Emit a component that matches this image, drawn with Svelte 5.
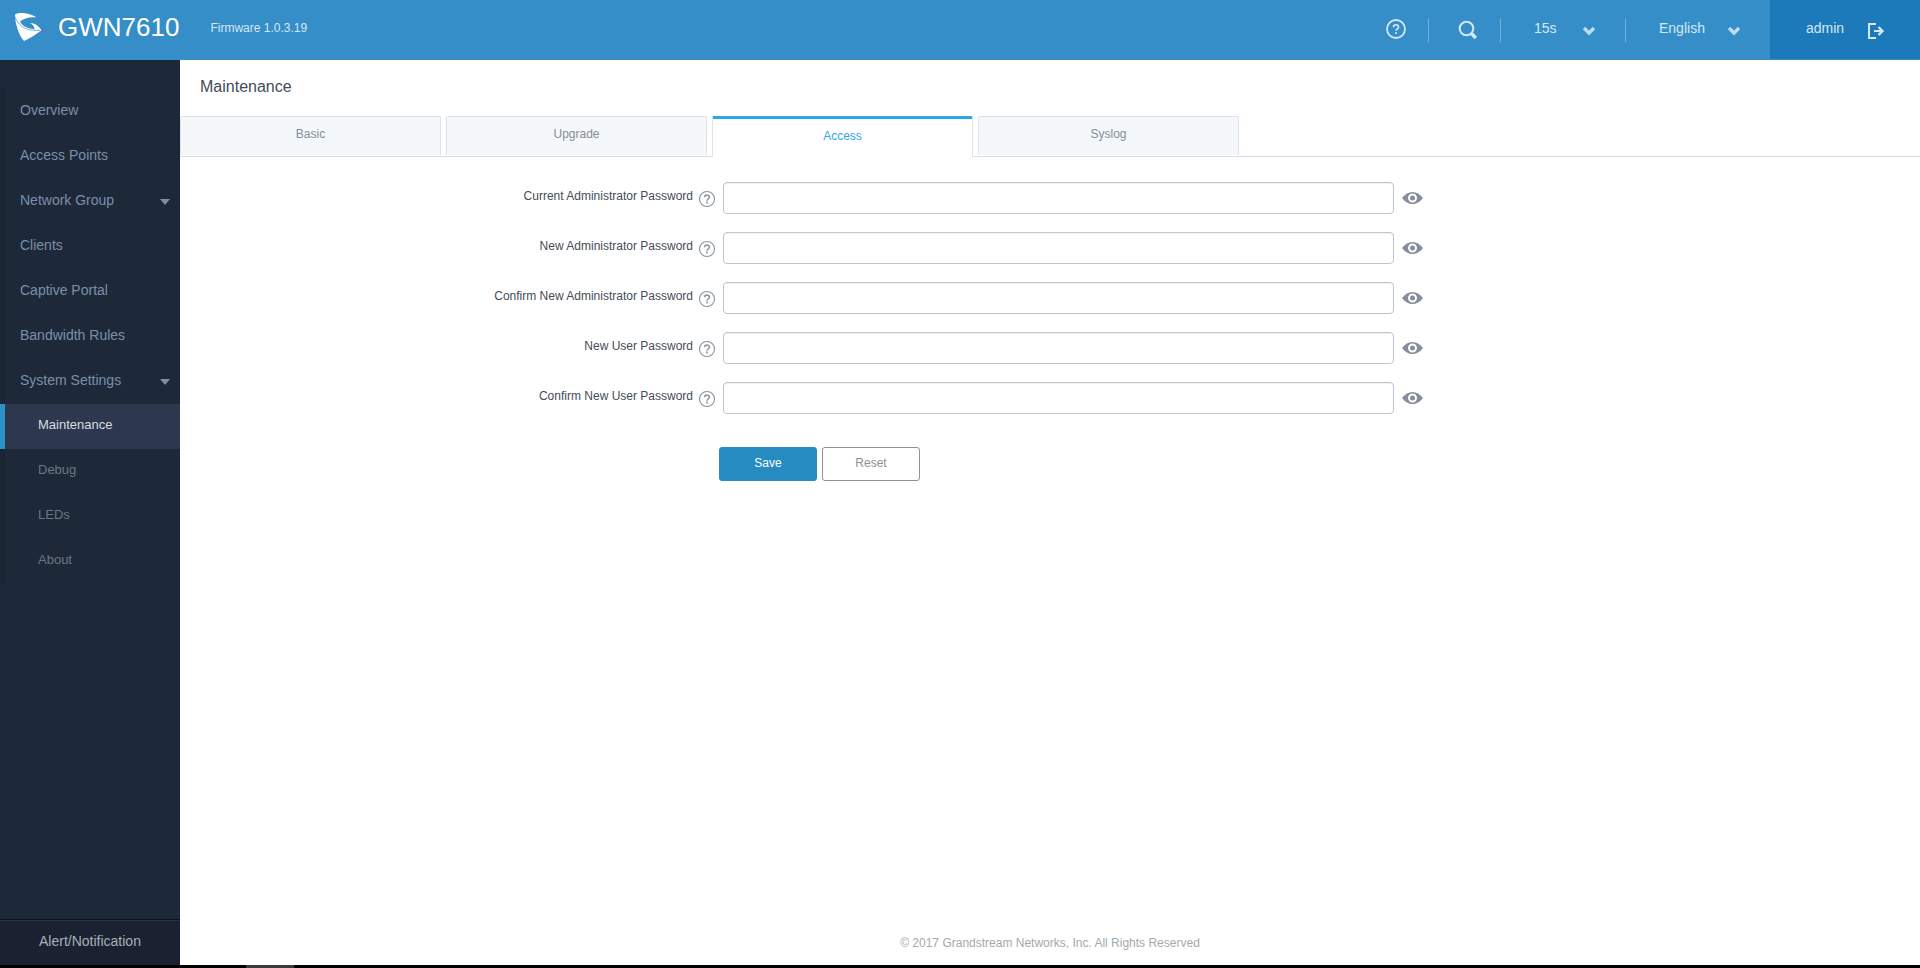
<script>
  let refresh = '15s'
  let language = 'English'
  let activeTab = 'Access'

  const menu = [
    { label: 'Overview' },
    { label: 'Access Points' },
    { label: 'Network Group', expandable: true },
    { label: 'Clients' },
    { label: 'Captive Portal' },
    { label: 'Bandwidth Rules' },
    { label: 'System Settings', expandable: true }
  ]
  const submenu = ['Maintenance', 'Debug', 'LEDs', 'About']
  const tabs = ['Basic', 'Upgrade', 'Access', 'Syslog']

  let fields = [
    { id: 'current-admin', label: 'Current Administrator Password', value: '', visible: false },
    { id: 'new-admin', label: 'New Administrator Password', value: '', visible: false },
    { id: 'confirm-admin', label: 'Confirm New Administrator Password', value: '', visible: false },
    { id: 'new-user', label: 'New User Password', value: '', visible: false },
    { id: 'confirm-user', label: 'Confirm New User Password', value: '', visible: false }
  ]

  function reset() {
    fields = fields.map((field) => ({ ...field, value: '', visible: false }))
  }
</script>

<div class="app">
  <header class="topbar">
    <svg class="logo" width="30" height="30" viewBox="0 0 30 30" aria-hidden="true">
      <path fill="#fff" d="M1 2.500C3 1 6 .9 9 1 14 1.300 19 3 22.500 5.500 15 4.800 10 6.500 6 9.500 8 13.500 12 16.200 20.500 17.300 20.500 14.500 18.500 12 16 11 20.500 10.800 25 14 27.500 18.300 22 22.500 16 26.500 10 29 5 23.500 1 12 1 2.500Z" />
      <path fill="none" stroke="#368fc9" stroke-width=".7" d="M1 5C4 12 9 17.500 19 18.200l7 .2" />
      <circle cx="28.500" cy="18.500" r=".7" fill="#d8406f" />
    </svg>
    <span class="product">GWN7610</span>
    <span class="firmware">Firmware 1.0.3.19</span>

    <div class="tools">
      <button class="tool tool--help" type="button" aria-label="Help">
        <svg width="20" height="20" viewBox="0 0 20 20" fill="none" stroke="currentColor" stroke-width="1.800">
          <circle cx="10" cy="10" r="9" />
          <path d="M7.500 8.200c0-3.300 5-3.300 5 0 0 1.800-2.500 1.800-2.500 3.600M10 13v2" stroke-width="1.600" />
        </svg>
      </button>
      <button class="tool tool--search" type="button" aria-label="Search">
        <svg width="20" height="20" viewBox="0 0 20 20" fill="none" stroke="currentColor">
          <circle cx="8.500" cy="8.500" r="6.800" stroke-width="2" />
          <path d="M13 13l4.800 5" stroke-width="3.400" />
        </svg>
      </button>
      <div class="picker picker--refresh">
        <select bind:value={refresh} aria-label="Refresh interval">
          <option>15s</option>
        </select>
        <svg class="chevron" width="14" height="10" viewBox="0 0 14 10"><path d="M2 2l5 5 5-5" fill="none" stroke="currentColor" stroke-width="3.400" /></svg>
      </div>
      <div class="picker picker--language">
        <select bind:value={language} aria-label="Language">
          <option>English</option>
        </select>
        <svg class="chevron" width="14" height="10" viewBox="0 0 14 10"><path d="M2 2l5 5 5-5" fill="none" stroke="currentColor" stroke-width="3.400" /></svg>
      </div>
      <button class="account" type="button">
        <span>admin</span>
        <svg width="18" height="16" viewBox="0 0 18 16" fill="none" stroke="currentColor" stroke-width="2">
          <path d="M9 1H2v14h7M7 8h9" />
          <path d="M11.500 4l4 4-4 4" stroke-width="2.400" />
        </svg>
      </button>
    </div>
  </header>

  <div class="body">
    <aside class="sidebar">
      <nav>
        {#each menu as item}
          <a class="item" href="#menu">
            <span>{item.label}</span>
            {#if item.expandable}<i class="arrow"></i>{/if}
          </a>
        {/each}
        {#each submenu as label}
          <a class="item item--sub" class:item--active={label === 'Maintenance'} href="#submenu">
            <span>{label}</span>
          </a>
        {/each}
      </nav>
      <a class="alerts" href="#alerts">Alert/Notification</a>
    </aside>

    <main>
      <h1>Maintenance</h1>
      <div class="tabs" role="tablist">
        {#each tabs as tab}
          <button
            class="tab"
            class:tab--active={tab === activeTab}
            type="button"
            role="tab"
            aria-selected={tab === activeTab}
            on:click={() => (activeTab = tab)}
          >{tab}</button>
        {/each}
      </div>

      <form on:submit|preventDefault on:reset|preventDefault={reset}>
        {#each fields as field}
          <div class="row">
            <div class="caption">
              <label for={field.id}>{field.label}</label>
              <svg class="hint" width="18" height="18" viewBox="0 0 18 18" fill="none" stroke="currentColor">
                <circle cx="9" cy="9" r="7.500" stroke-width="1.100" />
                <path d="M6.600 7.300c0-3 4.800-3 4.800 0 0 1.700-2.400 1.700-2.400 3.400M9 11.600v2" stroke-width="1.500" />
              </svg>
            </div>
            <input
              id={field.id}
              type={field.visible ? 'text' : 'password'}
              bind:value={field.value}
            />
            <button
              class="reveal"
              type="button"
              aria-label="Show password"
              on:click={() => (field.visible = !field.visible)}
            >
              <svg width="21" height="12" viewBox="0 0 21 12">
                <path fill="currentColor" d="M0 6C6-2 15-2 21 6 15 14 6 14 0 6Z" />
                <circle cx="10.500" cy="6" r="3.500" fill="currentColor" stroke="#fff" stroke-width="2" />
              </svg>
            </button>
          </div>
        {/each}
        <div class="row">
          <div class="actions">
            <button class="button button--primary" type="submit">Save</button>
            <button class="button button--secondary" type="reset">Reset</button>
          </div>
        </div>
      </form>

      <footer>© 2017 Grandstream Networks, Inc. All Rights Reserved</footer>
    </main>
  </div>
  <div class="dock"><span></span></div>
</div>

<style>
  :global(body) {
    margin: 0;
  }

  .app {
    display: flex;
    flex-direction: column;
    min-height: 100vh;
    font-family: "Liberation Sans", Arial, sans-serif;
    font-size: 12px;
    line-height: 16px;
    color: #454c57;
    background: #fff;
  }

  .app *,
  .app *::before {
    box-sizing: border-box;
  }

  button,
  select,
  input {
    margin: 0;
    padding: 0;
    border: 0;
    font: inherit;
    color: inherit;
    background: none;
  }

  button {
    cursor: pointer;
  }

  svg {
    display: block;
    flex: none;
  }

  a {
    color: inherit;
    text-decoration: none;
  }

  .topbar {
    display: flex;
    align-items: center;
    height: 60px;
    padding-left: 14px;
    color: #d5e8f5;
    background: #358ec8;
  }

  .logo {
    margin-bottom: 6px;
  }

  .product {
    margin-left: 14px;
    padding-bottom: 6px;
    font-size: 26px;
    line-height: 30px;
    color: #fff;
  }

  .firmware {
    margin-left: 31px;
    padding-bottom: 4px;
  }

  .tools {
    display: flex;
    align-items: center;
    height: 100%;
    margin-left: auto;
    font-size: 14px;
  }

  .tool {
    display: flex;
    align-items: center;
    height: 24px;
    border-right: 1px solid #72b0d9;
  }

  .tool--help {
    padding: 0 22px 2px 0;
  }

  .tool--search {
    padding: 0 22px 0 29px;
  }

  .picker {
    display: flex;
    align-items: center;
    height: 24px;
  }

  .picker--refresh {
    width: 125px;
    padding-left: 33px;
    border-right: 1px solid #72b0d9;
  }

  .picker--language {
    width: 144px;
    padding-left: 33px;
  }

  .picker select {
    height: 24px;
    padding-bottom: 4px;
    appearance: none;
    outline: none;
  }

  .picker--refresh select {
    width: 48px;
  }

  .picker--language select {
    width: 68px;
  }

  .chevron {
    margin-top: 2px;
    color: #bedcf0;
  }

  .account {
    display: flex;
    align-items: center;
    justify-content: space-between;
    align-self: flex-start;
    width: 150px;
    height: 59px;
    padding: 0 35px 0 36px;
    background: #1c79ba;
  }

  .account span {
    padding-bottom: 3px;
  }

  .account svg {
    margin-top: 3px;
  }

  .body {
    display: flex;
    flex: 1;
  }

  .sidebar {
    display: flex;
    flex: none;
    flex-direction: column;
    justify-content: space-between;
    width: 180px;
    padding-top: 29px;
    background: #1d2939;
  }

  .item {
    display: flex;
    align-items: center;
    justify-content: space-between;
    height: 45px;
    padding: 0 10px 3px 15px;
    border-left: 5px solid #1b2534;
    font-size: 14px;
    color: #7b8fa9;
  }

  .item--sub {
    padding-left: 33px;
    font-size: 13px;
    color: #6b7782;
  }

  .item--active {
    border-left-color: #2a95c5;
    color: #d8dce0;
    background: #2d384f;
  }

  .arrow {
    margin-top: 3px;
    border: 5px solid transparent;
    border-top: 6px solid #7b8fa9;
    border-bottom: 0;
  }

  .alerts {
    display: flex;
    align-items: center;
    height: 46px;
    padding: 0 0 4px 39px;
    border-top: 1px solid #0c1220;
    box-shadow: inset 0 1px #2a3344;
    font-size: 14px;
    color: #a7b0b8;
    background: #1a2232;
  }

  main {
    display: flex;
    flex: 1;
    flex-direction: column;
    min-width: 0;
  }

  h1 {
    margin: 0;
    padding: 17px 20px 19px;
    font-size: 16px;
    font-weight: 400;
    line-height: 20px;
  }

  .tabs {
    display: flex;
    gap: 5px;
    height: 41px;
    border-bottom: 1px solid #dadcde;
  }

  .tab {
    width: 15%;
    height: 39px;
    padding-bottom: 4px;
    border: 1px solid #dde3e7;
    border-bottom: 0;
    border-radius: 2px 2px 0 0;
    color: #858d98;
    background: #f4f8fb;
  }

  .tab--active {
    height: 41px;
    border-top: 3px solid #2ca6e4;
    color: #35a7df;
    background: #fff;
  }

  form {
    display: flex;
    flex-direction: column;
    gap: 18px;
    padding-top: 25px;
  }

  .row {
    display: grid;
    grid-template-columns: 543fr 671fr 526fr;
    align-items: center;
  }

  .caption {
    display: flex;
    align-items: center;
    justify-content: flex-end;
    gap: 5px;
    padding-right: 7px;
  }

  .caption label {
    padding-bottom: 4px;
  }

  .hint {
    margin-top: 2px;
    color: #8a929f;
  }

  .row input {
    height: 32px;
    padding: 0 8px;
    border: 1px solid #bfc5ce;
    border-radius: 4px;
    box-shadow: inset 0 1px 1px #eef0f2;
  }

  .reveal {
    justify-self: start;
    margin-left: 8px;
    color: #858e9b;
  }

  .actions {
    display: flex;
    grid-column: 2;
    gap: 5px;
    margin: 15px 0 0 -4px;
  }

  .button {
    width: 98px;
    height: 34px;
    padding-bottom: 2px;
    border: 1px solid #8a91a0;
    border-radius: 3px;
    color: #8a919c;
  }

  .button--primary {
    border-color: #258bc0;
    color: #fff;
    background: #258bc0;
  }

  footer {
    margin-top: auto;
    padding-bottom: 14px;
    text-align: center;
    color: #a3a9ae;
  }

  .dock {
    height: 3px;
    padding-left: 246px;
    background: #000;
  }

  .dock span {
    display: block;
    width: 48px;
    height: 3px;
    background: #3c3a3a;
  }
</style>
